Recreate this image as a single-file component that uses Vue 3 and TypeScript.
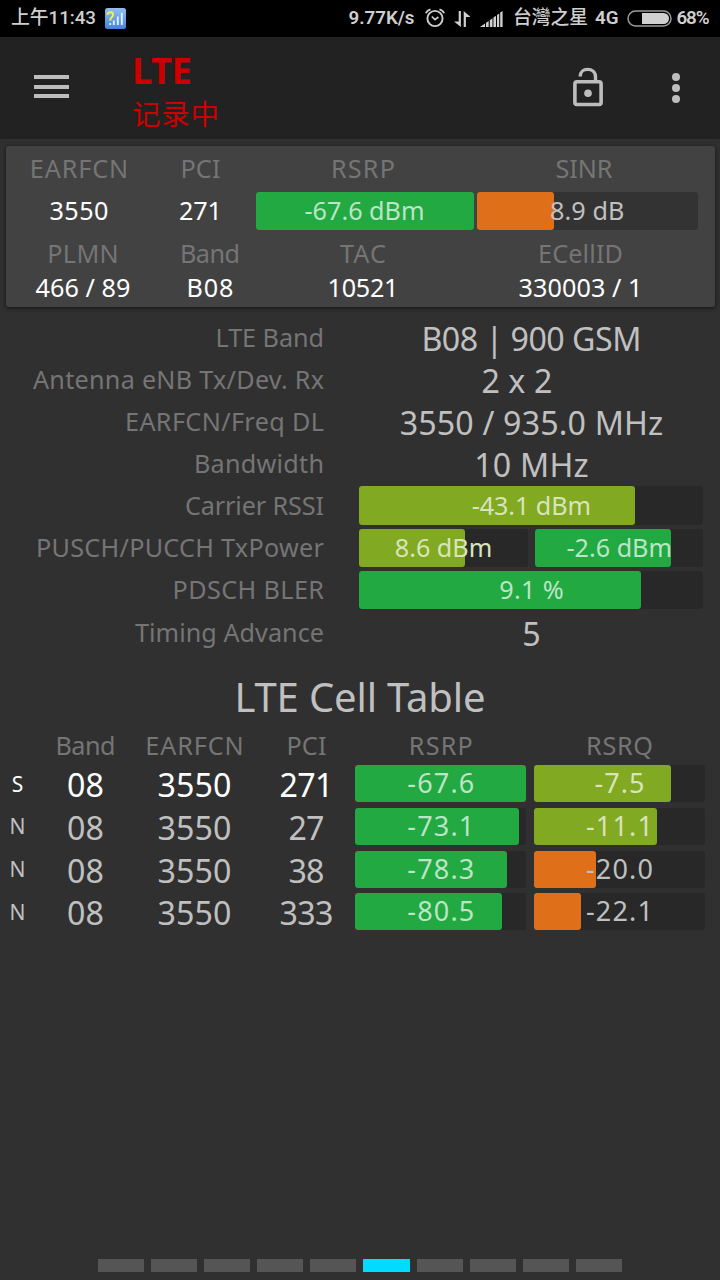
<script setup lang="ts">
interface Label {
  text: string
  width: number
}
interface Meter extends Label {
  fill: number
  tone: 'green' | 'lime' | 'orange'
}
interface Detail {
  label: Label
  value?: Label
  narrow?: boolean
  meters?: Meter[]
}
interface Cell {
  kind: string
  serving: boolean
  band: Label
  earfcn: Label
  pci: Label
  rsrp: Meter
  rsrq: Meter
}

const t = (text: string, width: number): Label => ({ text, width })
const m = (text: string, width: number, fill: number, tone: Meter['tone']): Meter => ({ text, width, fill, tone })

// Tracks a label so that its glyphs span the given width.
const vFit = {
  mounted(el: HTMLElement, binding: { value: number }) {
    const count = Array.from(el.textContent ?? '').length
    if (count < 2) return
    const gap = (binding.value - el.getBoundingClientRect().width) / (count - 1)
    el.style.letterSpacing = `${gap}px`
    el.style.marginRight = `${-gap}px`
  },
}

const heads = [t('EARFCN', 98.5), t('PCI', 40), t('RSRP', 64), t('SINR', 57)]
const primary = [t('3550', 59), t('271', 43)]
const primaryMeters = [m('-67.6 dBm', 120, 100, 'green'), m('8.9 dB', 74.5, 34.8, 'orange')]
const heads2 = [t('PLMN', 71.5), t('Band', 60), t('TAC', 46), t('ECellID', 85)]
const secondary = [t('466 / 89', 95), t('B08', 47), t('10521', 71), t('330003 / 1', 124)]

const details: Detail[] = [
  { label: t('LTE Band', 108.5), value: t('B08 | 900 GSM', 220) },
  { label: t('Antenna eNB Tx/Dev. Rx', 291), value: t('2 x 2', 71), narrow: true },
  { label: t('EARFCN/Freq DL', 199), value: t('3550 / 935.0 MHz', 263.5) },
  { label: t('Bandwidth', 130), value: t('10 MHz', 114.5) },
  { label: t('Carrier RSSI', 139), meters: [m('-43.1 dBm', 119.5, 80, 'lime')] },
  {
    label: t('PUSCH/PUCCH TxPower', 288),
    meters: [m('8.6 dBm', 97.5, 62.8, 'lime'), m('-2.6 dBm', 105.5, 80.9, 'green')],
  },
  { label: t('PDSCH BLER', 151.5), meters: [m('9.1 %', 64.5, 81.8, 'green')] },
  { label: t('Timing Advance', 189), value: t('5', 18) },
]

const columns = [t('Band', 60), t('EARFCN', 98.5), t('PCI', 40), t('RSRP', 64), t('RSRQ', 67)]
const cells: Cell[] = [
  { kind: 'S', serving: true, band: t('08', 37), earfcn: t('3550', 74), pci: t('271', 54), rsrp: m('-67.6', 67, 100, 'green'), rsrq: m('-7.5', 50, 80.1, 'lime') },
  { kind: 'N', serving: false, band: t('08', 37), earfcn: t('3550', 74), pci: t('27', 36), rsrp: m('-73.1', 67, 96, 'green'), rsrq: m('-11.1', 67, 71.9, 'lime') },
  { kind: 'N', serving: false, band: t('08', 37), earfcn: t('3550', 74), pci: t('38', 36), rsrp: m('-78.3', 67, 89, 'green'), rsrq: m('-20.0', 67, 36.2, 'orange') },
  { kind: 'N', serving: false, band: t('08', 37), earfcn: t('3550', 74), pci: t('333', 54), rsrp: m('-80.5', 67, 86, 'green'), rsrq: m('-22.1', 67, 27.6, 'orange') },
]
const pages = 10
const currentPage = 6
</script>

<template>
  <div class="screen">
    <div class="status">
      <span v-fit="85" class="time">上午11:43</span>
      <svg class="app-badge" width="21" height="21" viewBox="0 0 21 21">
        <defs>
          <linearGradient id="badge" x1="0" y1="0" x2="0" y2="1">
            <stop offset="0" stop-color="#94bdf0" />
            <stop offset="1" stop-color="#3f86e0" />
          </linearGradient>
        </defs>
        <rect width="21" height="21" rx="2.5" fill="url(#badge)" />
        <path d="M2.3 6.8Q2.8 4.200 5.300 4.200Q8.100 4.200 8.100 6.700Q8.100 8.200 6.500 9.500Q5.200 10.500 5.200 12.800" fill="none" stroke="#f3f04c" stroke-width="1.900" />
        <path d="M5.200 15v2M8.800 12.500v4.500M12.800 8.500v8.500M16.800 4.700v12.300" stroke="#e8f2ff" stroke-width="1.800" />
      </svg>
      <div class="status-right">
        <span v-fit="66" class="speed">9.77K/s</span>
        <svg class="alarm" width="20" height="20" viewBox="0 0 20 20" fill="none" stroke="#cfcfcf">
          <circle cx="10" cy="10.500" r="7.600" stroke-width="1.900" />
          <path d="M6.800 8.500L10 11.700l3.400-2.700" stroke-width="1.700" />
          <path d="M.9 5.200Q2 2.200 5.500 1.300M14.500 1.300Q18 2.200 19.100 5.200" stroke-width="1.800" />
        </svg>
        <svg class="arrows" width="17" height="16" viewBox="0 0 17 16" fill="#cfcfcf">
          <path d="M4.700 0h2.200v16L0 10.500h4.700zM9.700 0l6.800 6h-4.600v10H9.700z" />
        </svg>
        <svg class="signal" width="23" height="16" viewBox="0 0 23 16" fill="#cfcfcf">
          <path d="M0 16l5-3.500V16zM6 11.700L8.700 10v6H6zM9.800 9.200L12.500 7.200V16H9.800zM13.400 6.600L16 4.700V16h-2.600zM17 4l2.200-1.600V16H17zM20.200 1.600L22.600 0v16h-2.400z" />
        </svg>
        <span v-fit="75" class="carrier">台灣之星</span>
        <span v-fit="23.500" class="net">4G</span>
        <svg class="battery" width="45" height="17" viewBox="0 0 45 17">
          <rect x="1" y="1" width="43" height="15" rx="7.500" fill="none" stroke="#9a9a9a" stroke-width="1.500" />
          <path d="M15 3h21.500a5.500 5.500 0 0 1 0 11H15z" fill="#d0d0d0" />
        </svg>
        <span v-fit="33" class="percent">68%</span>
      </div>
    </div>

    <header class="toolbar">
      <div class="menu"><i /><i /><i /></div>
      <div class="heading">
        <div class="mode"><span v-fit="60">LTE</span></div>
        <div class="logging"><span v-fit="87">记录中</span></div>
      </div>
      <svg class="lock" width="32" height="40" viewBox="0 0 32 40">
        <rect x="2.900" y="14.800" width="26.200" height="22.700" rx="2" fill="none" stroke="#bdbdbd" stroke-width="3.600" />
        <path d="M8.200 9.500C8.200 5 11.500 2.400 15.600 2.400S23.500 5 23.500 9.800V14" fill="none" stroke="#bdbdbd" stroke-width="3.400" />
        <circle cx="16" cy="26.200" r="3.800" fill="#bdbdbd" />
      </svg>
      <div class="more"><i /><i /><i /></div>
    </header>

    <section class="card">
      <div class="card-row heads">
        <div v-for="h in heads" :key="h.text"><span v-fit="h.width">{{ h.text }}</span></div>
      </div>
      <div class="card-row primary">
        <div v-for="p in primary" :key="p.text"><span v-fit="p.width">{{ p.text }}</span></div>
        <div v-for="b in primaryMeters" :key="b.text" class="meter">
          <div class="fill" :class="b.tone" :style="{ width: b.fill + '%' }" />
          <span v-fit="b.width">{{ b.text }}</span>
        </div>
      </div>
      <div class="card-row heads second">
        <div v-for="h in heads2" :key="h.text"><span v-fit="h.width">{{ h.text }}</span></div>
      </div>
      <div class="card-row second values">
        <div v-for="s in secondary" :key="s.text"><span v-fit="s.width">{{ s.text }}</span></div>
      </div>
    </section>

    <section class="details">
      <div v-for="d in details" :key="d.label.text" class="detail">
        <div class="detail-label"><span v-fit="d.label.width">{{ d.label.text }}</span></div>
        <div v-if="d.value" class="detail-value" :class="{ narrow: d.narrow }">
          <span v-fit="d.value.width">{{ d.value.text }}</span>
        </div>
        <div v-else class="detail-meters">
          <div v-for="b in d.meters" :key="b.text" class="meter dark">
            <div class="fill" :class="b.tone" :style="{ width: b.fill + '%' }" />
            <span v-fit="b.width">{{ b.text }}</span>
          </div>
        </div>
      </div>
    </section>

    <h2 class="title"><span v-fit="251">LTE Cell Table</span></h2>

    <section class="table">
      <div class="table-row table-head">
        <div />
        <div v-for="c in columns" :key="c.text"><span v-fit="c.width">{{ c.text }}</span></div>
      </div>
      <div v-for="(c, i) in cells" :key="i" class="table-row" :class="{ serving: c.serving }">
        <div class="kind">{{ c.kind }}</div>
        <div class="number"><span v-fit="c.band.width">{{ c.band.text }}</span></div>
        <div class="number"><span v-fit="c.earfcn.width">{{ c.earfcn.text }}</span></div>
        <div class="number"><span v-fit="c.pci.width">{{ c.pci.text }}</span></div>
        <div v-for="(b, j) in [c.rsrp, c.rsrq]" :key="j" class="meter dark">
          <div class="fill" :class="b.tone" :style="{ width: b.fill + '%' }" />
          <span v-fit="b.width">{{ b.text }}</span>
        </div>
      </div>
    </section>

    <nav class="pager">
      <i v-for="n in pages" :key="n" :class="{ current: n === currentPage }" />
    </nav>
  </div>
</template>

<style>
body {
  margin: 0;
  background: #303030;
}
</style>

<style scoped>
.screen {
  width: 720px;
  height: 1280px;
  display: flex;
  flex-direction: column;
  overflow: hidden;
  background: #303030;
  color: #c0c0c0;
  font-family: "Noto Sans", "Noto Sans CJK SC", sans-serif;
  font-size: 25.2px;
  line-height: 30px;
  white-space: nowrap;
}
span {
  display: inline-block;
}
svg {
  display: block;
  flex: none;
}
.status {
  height: 37px;
  flex: none;
  box-sizing: border-box;
  padding: 0 10.5px 0 11px;
  display: flex;
  align-items: center;
  background: #000;
  color: #cfcfcf;
  font: 500 18.8px/37px Roboto, "Noto Sans CJK TC", sans-serif;
}
.speed,
.net,
.percent {
  font-weight: 600;
}
.app-badge {
  margin-left: 9px;
}
.status-right {
  margin-left: auto;
  display: flex;
  align-items: center;
}
.alarm {
  margin-left: 10px;
  margin-bottom: 1px;
}
.arrows {
  margin-left: 9px;
}
.signal {
  margin-left: 9px;
}
.carrier {
  margin-left: 10.5px;
}
.net {
  margin-left: 7px;
}
.battery {
  margin: 0 5px 0 8px;
}
.toolbar {
  height: 102px;
  flex: none;
  box-sizing: border-box;
  padding: 0 40px 0 34px;
  display: flex;
  background: #222;
}
.menu {
  width: 35px;
  margin-top: 38px;
  display: flex;
  flex-direction: column;
  gap: 5.7px;
}
.menu i {
  height: 4px;
  background: #bdbdbd;
}
.heading {
  flex: 1;
  margin-left: 63px;
  color: #c00;
}
.mode {
  margin-top: 12px;
  height: 41px;
  font-size: 36.4px;
  font-weight: 700;
  line-height: 42px;
}
.logging {
  height: 46px;
  font: 28.5px/46px "Noto Sans CJK SC", sans-serif;
}
.lock {
  margin-top: 30px;
}
.more {
  width: 8px;
  margin: 36px 0 0 68px;
  display: flex;
  flex-direction: column;
  gap: 3px;
}
.more i {
  height: 8px;
  border-radius: 50%;
  background: #bdbdbd;
}
.card {
  flex: none;
  box-sizing: border-box;
  height: 161px;
  margin: 7px 5.5px 0;
  border-radius: 3px;
  background: #424242;
  box-shadow: 0 1px 4px rgba(0, 0, 0, 0.6);
  color: #fff;
}
.card-row {
  display: grid;
  align-items: center;
  justify-items: center;
  padding-left: 12.5px;
  grid-template-columns: 122px 121px 204px 238px;
  height: 44.5px;
}
.heads,
.table-head {
  color: #757575;
}
.card-row.primary {
  height: 40.5px;
  grid-template-columns: 122px 121px 216px 220.5px;
}
.primary > div:not(.meter) {
  margin-top: -1px;
}
.primary > .meter:nth-child(3) {
  justify-self: end;
  width: 218px;
  margin-right: 3.5px;
}
.card-row.second {
  grid-template-columns: 130px 124px 182px 253px;
}
.card-row.values {
  height: 24px;
  margin-top: -4px;
}
.meter {
  position: relative;
  width: 100%;
  height: 38.5px;
  border-radius: 3px;
  background: #333;
  color: #c0c0c0;
  display: flex;
  align-items: center;
  justify-content: center;
}
.meter.dark {
  background: #282828;
}
.fill {
  position: absolute;
  left: 0;
  top: 0;
  height: 100%;
  border-radius: 3px;
}
.fill + span {
  position: relative;
  margin-top: -1px;
}
.green {
  background: #22a941;
}
.lime {
  background: #81a922;
}
.orange {
  background: #e06f1a;
}
.green + span {
  color: #bce4c6;
}
.lime + span {
  color: #d9e4bb;
}
.details {
  flex: none;
  margin-top: 9px;
}
.detail {
  display: grid;
  grid-template-columns: 324px 344px;
  column-gap: 35.4px;
  height: 42.15px;
  align-items: center;
}
.detail-label {
  margin-top: -1px;
  color: #757575;
  text-align: right;
}
.detail-value {
  padding-top: 3px;
  font-size: 32.2px;
  line-height: 39px;
  text-align: center;
}
.detail-value.narrow {
  padding-right: 29px;
}
.detail-meters {
  display: flex;
  gap: 7.5px;
}
.title {
  flex: none;
  margin: 16px 0 0;
  height: 59px;
  font-size: 40px;
  font-weight: 400;
  line-height: 56px;
  text-align: center;
}
.table {
  flex: none;
}
.table-row {
  display: grid;
  grid-template-columns: 35px 101px 117px 107px 171px 171px;
  justify-items: center;
  align-items: center;
  height: 42.8px;
  font-size: 32.2px;
}
.table-row > :nth-child(5) {
  margin-left: -9.4px;
}
.table-row > :nth-child(6) {
  margin-left: 6px;
}
.table-head {
  height: 34px;
  font-size: 25.2px;
}
.table-row .meter {
  height: 37px;
  width: 171px;
  font-size: 27px;
}
.number {
  padding-top: 3px;
}
.serving {
  color: #fff;
}
.kind {
  font-size: 21px;
}
.pager {
  margin: auto 0 8px 98px;
  display: flex;
  gap: 7px;
}
.pager i {
  width: 46.1px;
  height: 13px;
  background: #555;
}
.pager .current {
  background: #00dcff;
}
</style>
